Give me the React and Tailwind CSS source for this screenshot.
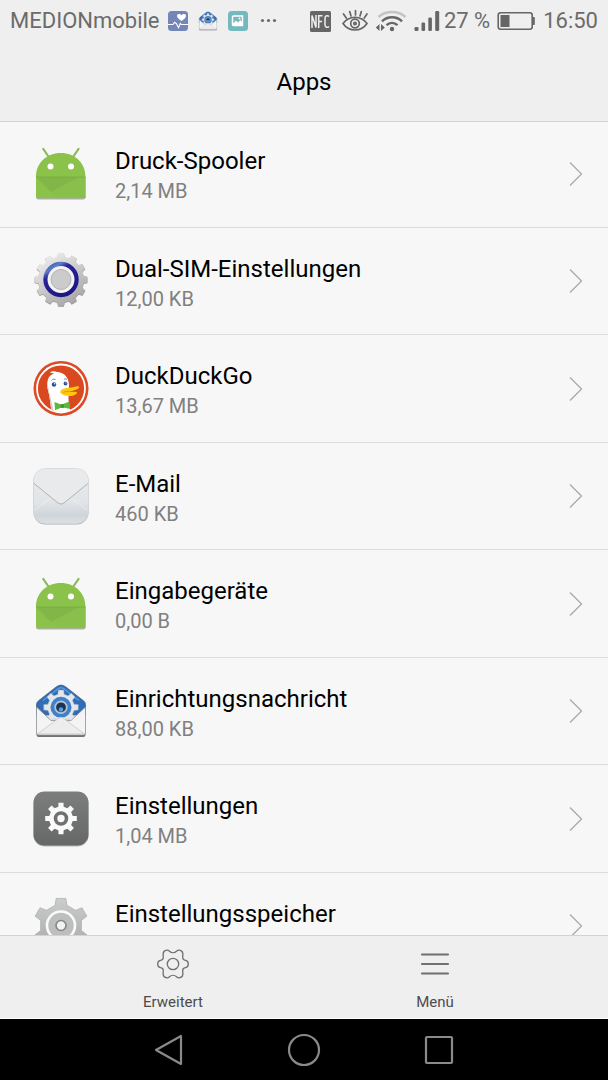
// Builds a closed cog outline. tip and base are shares of one tooth pitch.
function cogPoints({ cx, cy, teeth, outer, inner, tip = 0.36, base = 0.56, start = -90 }) {
  const pitch = 360 / teeth;
  const points = [];
  for (let i = 0; i < teeth; i++) {
    const mid = start + i * pitch;
    [
      [inner, -base / 2],
      [outer, -tip / 2],
      [outer, tip / 2],
      [inner, base / 2],
    ].forEach(([radius, share]) => {
      const angle = ((mid + share * pitch) * Math.PI) / 180;
      points.push(
        `${(cx + radius * Math.cos(angle)).toFixed(2)},${(cy + radius * Math.sin(angle)).toFixed(2)}`
      );
    });
  }
  return points.join(" ");
}

function Cog({ cx, cy, teeth, outer, inner, tip, base, start, ...props }) {
  return (
    <polygon
      points={cogPoints({ cx, cy, teeth, outer, inner, tip, base, start })}
      strokeLinejoin="round"
      {...props}
    />
  );
}

function AppIcon({ children }) {
  return (
    <svg viewBox="0 0 60 60" className="size-[60px] shrink-0" aria-hidden="true">
      {children}
    </svg>
  );
}

function AndroidIcon() {
  return (
    <AppIcon>
      <path d="M5 52h49.500v1a2.500 2.500 0 0 1-2.500 2.500H7.500A2.500 2.500 0 0 1 5 53Z" fill="#a9b39c" />
      <path d="M12.300 5 17.800 13M47.500 5 42 13" stroke="#8bb85a" strokeWidth="2.2" strokeLinecap="round" />
      <path d="M5 33C5 19 15.500 9 29.800 9S54.500 19 54.500 33v18.500A2.500 2.500 0 0 1 52 54H7.500A2.500 2.500 0 0 1 5 51.500Z" fill="#8bc34a" />
      <path d="M5 33 22 50 27 54h27.500V33Z" fill="#89c04b" />
      <path d="M5 33 20 48 48 33Z" fill="#82b648" />
      <path d="M5 33h49.500" stroke="#78ac41" strokeWidth=".9" />
      <circle cx="19.500" cy="22.500" r="3" fill="#fff" />
      <circle cx="40" cy="22.500" r="3" fill="#fff" />
    </AppIcon>
  );
}

function DualSimIcon() {
  return (
    <AppIcon>
      <defs>
        <linearGradient id="simBody" x1="0" y1="0" x2="0.6" y2="1">
          <stop offset="0" stopColor="#f6f6f6" />
          <stop offset="1" stopColor="#a9a9a9" />
        </linearGradient>
        <linearGradient id="simRing" x1="0" y1="0" x2="0.6" y2="1">
          <stop offset="0" stopColor="#2c3f9c" />
          <stop offset="0.2" stopColor="#5d80c8" />
          <stop offset="0.35" stopColor="#2a2298" />
          <stop offset="1" stopColor="#1d1685" />
        </linearGradient>
      </defs>
      <Cog cx={30} cy={29.3} teeth={12} outer={26.6} inner={23} tip={0.42} base={0.62} fill="#979797" />
      <Cog cx={30} cy={28.5} teeth={12} outer={26.5} inner={23} tip={0.42} base={0.62} fill="url(#simBody)" />
      <circle cx="30" cy="28.500" r="14" fill="#f2f2f2" />
      <circle cx="30" cy="28.500" r="15.600" fill="none" stroke="url(#simRing)" strokeWidth="4.200" />
      <circle cx="30" cy="28.500" r="10" fill="#cbcbcb" stroke="#b3b3b3" />
    </AppIcon>
  );
}

function DuckIcon() {
  return (
    <AppIcon>
      <defs>
        <clipPath id="duckClip">
          <circle cx="30" cy="29.500" r="23.500" />
        </clipPath>
      </defs>
      <circle cx="30" cy="29.500" r="27.500" fill="#dc4a26" />
      <circle cx="30" cy="29.500" r="24" fill="#d9481f" stroke="#fff" strokeWidth="1.800" />
      <g clipPath="url(#duckClip)">
        <path d="M21 56 18.500 38c-.9-6-2.700-9-2.200-14 .5-5.500 3.200-8.500 6.700-9.500-1.500-.8-3-.9-4.200-.8 2.200-1.800 5.200-1.700 7.200-.7 6.500.5 10.500 4 11.700 10.500.7 4.500-.2 11-.2 16 0 5 1.500 11 2.500 16Z" fill="#fff" />
        <path d="M21 56 18.500 38c-.9-6-2.700-9-2.200-14 1.700 9 4.700 20 7.200 32Z" fill="#d6cdca" />
      </g>
      <path d="M29 33c1-3.200 5-4 9-4.300 3.500-.3 6-1.400 9-1.500 2.200.2 1 2.500-1.500 3.400-2.500 1-5 1.600-7.500 2 2.500.5 5.200-.2 7.500.5 1.500.7-.5 2.700-3 3.300-4.500 1.300-11.500.2-13.500-3.400Z" fill="#fdc80a" />
      <path d="M32.500 33.300c2.500-.9 4-1 6-1" stroke="#d89a09" fill="none" />
      <circle cx="23" cy="25.500" r="2.200" fill="#2d4f8e" />
      <circle cx="34.500" cy="24.500" r="1.900" fill="#2d4f8e" />
      <circle cx="23.700" cy="24.700" r=".7" fill="#fff" />
      <circle cx="35" cy="23.800" r=".6" fill="#fff" />
      <path d="M20.500 21.500c1-1.300 2.500-1.500 4-1M33 20.500c1-.8 2.200-.8 3 0" stroke="#2d4f8e" strokeWidth=".7" fill="none" />
      <path d="m23.500 43 6.500 2.500 2-.5 6.500-2.500.7 7.500-6.700-1.500-2.500.3-6 2.500Z" fill="#5fb742" />
      <path d="m29.500 45.300 3.500-.3.300 3.700-3.500.3Z" fill="#43992e" />
    </AppIcon>
  );
}

function MailIcon() {
  return (
    <AppIcon>
      <defs>
        <linearGradient id="mailBody" x1="0" y1="0" x2="0" y2="1">
          <stop offset="0" stopColor="#e9ebec" />
          <stop offset="0.6" stopColor="#e2e5e8" />
          <stop offset="0.85" stopColor="#cfd5da" />
          <stop offset="1" stopColor="#dce0e3" />
        </linearGradient>
      </defs>
      <rect x="2.500" y="3.500" width="55" height="55" rx="12" fill="#acaeb0" />
      <rect x="2.500" y="2.500" width="55" height="55" rx="12" fill="url(#mailBody)" stroke="#d4d6d7" strokeWidth=".8" />
      <path d="m4 44 17-13M56 44 39 31" stroke="#eef0f1" strokeWidth=".8" />
      <path d="M3 14.500A11.500 11.500 0 0 1 14.500 3h31A11.500 11.500 0 0 1 57 14.500v3L33 37q-3 2.400-6 0L3 17.500Z" fill="#e8eaeb" />
      <path d="M3 17.500 27 37q3 2.400 6 0l24-19.500" fill="none" stroke="#a9acae" strokeWidth=".9" />
    </AppIcon>
  );
}

function SetupMessageIcon() {
  return (
    <AppIcon>
      <SetupMessageArt />
    </AppIcon>
  );
}

function SetupMessageArt() {
  return (
    <>
      <path d="M5.500 23.500q0-2 2-3.700L25.500 5.700q4.500-3.200 9 0l18 14.100q2 1.700 2 3.700V34h-49Z" fill="#2f6db8" stroke="#46607f" strokeWidth=".8" />
      <path d="M12 19.500 27 7.800q3-2.200 6 0l15 11.700" fill="none" stroke="#5a97da" strokeWidth="1.500" />
      <Cog cx={30} cy={26.3} teeth={8} outer={17.5} inner={13.5} tip={0.4} base={0.6} fill="#e3e6ea" stroke="#93a5ba" strokeWidth=".5" />
      <circle cx="30" cy="26.300" r="10.500" fill="#3f80cb" />
      <circle cx="30" cy="26.300" r="5.800" fill="#1d3554" stroke="#b4c2d2" strokeWidth="1.800" />
      <circle cx="30" cy="28.500" r="2.200" fill="#4fa3df" />
      <path d="M5.500 50h49v3.500A2.500 2.500 0 0 1 52 56H8a2.500 2.500 0 0 1-2.500-2.500Z" fill="#6f7173" />
      <path d="M5.500 26 20 39.500h20L54.500 26v25.500A2.500 2.500 0 0 1 52 54H8a2.500 2.500 0 0 1-2.500-2.500Z" fill="#f4f4f5" stroke="#8d9093" strokeWidth=".8" />
      <path d="M6.500 53 28 37q2-1.500 4 0L53.500 53Z" fill="#ededee" stroke="#c6c8ca" strokeWidth=".8" />
    </>
  );
}

function SettingsIcon() {
  return (
    <AppIcon>
      <defs>
        <linearGradient id="settingsBody" x1="0" y1="0" x2="0" y2="1">
          <stop offset="0" stopColor="#7c7e7d" />
          <stop offset="1" stopColor="#666867" />
        </linearGradient>
      </defs>
      <rect x="2.500" y="3" width="55" height="54.500" rx="11" fill="#b5b6b5" />
      <rect x="2.500" y="2.500" width="55" height="54" rx="11" fill="url(#settingsBody)" />
      <Cog cx={30} cy={29.5} teeth={8} outer={16} inner={12} tip={0.4} base={0.56} fill="#fafafa" />
      <circle cx="30" cy="29.500" r="5.500" fill="none" stroke="#6f7170" strokeWidth="3.600" />
    </AppIcon>
  );
}

function StorageIcon() {
  return (
    <AppIcon>
      <defs>
        <linearGradient id="storageBody" x1="0" y1="0" x2="0" y2="1">
          <stop offset="0" stopColor="#cbcccc" />
          <stop offset="1" stopColor="#a6a7a7" />
        </linearGradient>
      </defs>
      <Cog cx={30} cy={29.5} teeth={6} outer={27.5} inner={21} tip={0.34} base={0.54} fill="url(#storageBody)" stroke="#b0b1b1" strokeWidth=".8" />
      <circle cx="30" cy="29.500" r="14" fill="#bdbebe" stroke="#fafafa" strokeWidth="2.600" />
      <circle cx="30" cy="29.500" r="5" fill="#f2f2f2" stroke="#858686" strokeWidth="1.600" />
    </AppIcon>
  );
}

const apps = [
  { name: "Druck-Spooler", size: "2,14 MB", icon: AndroidIcon },
  { name: "Dual-SIM-Einstellungen", size: "12,00 KB", icon: DualSimIcon },
  { name: "DuckDuckGo", size: "13,67 MB", icon: DuckIcon },
  { name: "E-Mail", size: "460 KB", icon: MailIcon },
  { name: "Eingabegeräte", size: "0,00 B", icon: AndroidIcon },
  { name: "Einrichtungsnachricht", size: "88,00 KB", icon: SetupMessageIcon },
  { name: "Einstellungen", size: "1,04 MB", icon: SettingsIcon },
  { name: "Einstellungsspeicher", size: "", icon: StorageIcon },
];

function StatusBar() {
  return (
    <div className="flex h-[42px] items-center justify-between px-[10px] text-[22px] leading-[26px] text-[#6b6b6b]">
      <div className="flex items-center gap-2">
        <span>MEDIONmobile</span>
        <div className="flex items-center gap-[10px]">
          <svg viewBox="0 0 20 20" className="size-5" aria-hidden="true">
            <rect width="20" height="20" rx="3.500" fill="#7486b8" />
            <path d="M13.500 10C11 8 9 6.500 9 4.900c0-2 3-2.600 4.500-.6 1.500-2 4.500-1.400 4.500.6C18 6.500 16 8 13.500 10Z" fill="#fff" />
            <path d="M0 13.500h5l1.500-2.300 2 1.500 2 4 1.800-4.200 1 1H20" fill="none" stroke="#fff" strokeWidth="1.100" />
          </svg>
          <svg viewBox="4 2 52 56" className="size-5" aria-hidden="true">
            <SetupMessageArt />
          </svg>
          <svg viewBox="0 0 20 20" className="size-5" aria-hidden="true">
            <rect width="20" height="20" rx="3.500" fill="#74b9be" />
            <path d="M5.500 5h9v9.500h-9a1 1 0 0 1-1-1V6a1 1 0 0 1 1-1Z" fill="none" stroke="#fff" strokeWidth="1.500" />
            <path d="m5 12.500 3-3 2 2 2.500-2.500 2 3v2H5Z" fill="#fff" />
            <circle cx="11.500" cy="7.500" r="1" fill="#fff" />
          </svg>
          <svg viewBox="0 0 20 20" className="size-5" fill="#6b6b6b" aria-hidden="true">
            <circle cx="4.500" cy="9.500" r="1.600" />
            <circle cx="10.500" cy="9.500" r="1.600" />
            <circle cx="16.500" cy="9.500" r="1.600" />
          </svg>
        </div>
      </div>
      <div className="flex items-center">
        <svg viewBox="0 0 21 21" className="mr-[10px] size-[21px]" role="img" aria-label="NFC">
          <rect width="21" height="21" rx="1.500" fill="#666" />
          <path d="M2 17V4.500l4 12V4M8.700 17V4.800h3.800M8.700 10.500h3.300M19 5.500c-1-1-4-1.500-4 2v6c0 3.500 3 3.200 4 2" fill="none" stroke="#f0f0f0" strokeWidth="1.500" />
        </svg>
        <svg viewBox="0 0 28 24" className="mr-[6px] h-6 w-7" fill="none" stroke="#666" strokeWidth="1.700" strokeLinecap="round" aria-hidden="true">
          <path d="M2 14.500C5 10.300 9 8.300 14 8.300s9 2 12 6.200c-3 4.400-7 6.500-12 6.500s-9-2.100-12-6.500Z" />
          <circle cx="14" cy="14.500" r="4.300" />
          <circle cx="14" cy="14.500" r="1.200" />
          <path d="m2.500 5 2.800 4M8.700 2.500l1.300 4.500M14.500 1.500V6M20.300 2.500 19 7M26 5l-2.800 4" />
        </svg>
        <svg viewBox="0 0 32 24" className="mr-[7px] h-6 w-8" fill="none" stroke="#666" strokeWidth="2.500" aria-hidden="true">
          <path d="M3.500 8C10.500 1.300 23.500 1.300 30.500 8" stroke="#c4c4c4" />
          <path d="M7 12.300c5.500-5.300 14.500-5.300 20 0M11.500 16.200c3.300-3 7.700-3 11 0" />
          <circle cx="17" cy="20" r="2.200" fill="#666" stroke="none" />
          <path d="M.8 18.500 4.500 15v7ZM9.800 18.500 6 15v7Z" fill="#666" stroke="none" />
        </svg>
        <svg viewBox="0 0 26 22" className="mr-[4px] h-[22px] w-[26px]" fill="#666" aria-hidden="true">
          <rect x="0.500" y="17" width="4" height="4" rx="1.200" />
          <rect x="7.500" y="12.500" width="3.600" height="8.500" rx="1.200" />
          <rect x="14.300" y="7.500" width="3.600" height="13.500" rx="1.200" />
          <rect x="21.200" y="1" width="4" height="20" rx="1.200" />
        </svg>
        <span>27 %</span>
        <svg viewBox="0 0 39 20" className="mx-[7px] h-5 w-[39px]" aria-hidden="true">
          <rect x="1.200" y="1.700" width="34" height="16.500" rx="2.500" fill="none" stroke="#666" strokeWidth="1.600" />
          <rect x="3.500" y="4" width="9" height="12" fill="#666" />
          <path d="M35.500 6h1.500q.8 0 .8.800v6.400q0 .8-.8.800h-1.500" fill="#666" />
        </svg>
        <span>16:50</span>
      </div>
    </div>
  );
}

function AppRow({ app }) {
  const Icon = app.icon;
  return (
    <li className="h-[107px] shrink-0 border-b border-[#dcdcdc] first:h-[106px] first:pb-[2px] odd:not-first:h-[108px]">
      <button type="button" className="flex size-full items-center pl-[31px] pr-[25px] text-left">
        <Icon />
        <span className="ml-6 min-w-0 flex-1 pt-[3px]">
          <span className="block truncate text-2xl leading-8 text-black">{app.name}</span>
          <span className="block h-7 text-xl leading-7 text-[#808080]">{app.size}</span>
        </span>
        <svg viewBox="0 0 14 26" className="h-[26px] w-[14px] shrink-0" fill="none" stroke="#aaa" strokeWidth="1.300" aria-hidden="true">
          <path d="M1 1.500 12.500 13 1 24.500" />
        </svg>
      </button>
    </li>
  );
}

export default function App() {
  return (
    <div className="flex h-screen flex-col bg-[#f7f7f7] font-[Roboto,sans-serif]">
      <header className="h-[122px] shrink-0 border-b border-[#d2d2d2] bg-[#efefef]">
        <StatusBar />
        <h1 className="py-6 text-center text-2xl leading-8 text-black">Apps</h1>
      </header>

      <main className="min-h-0 flex-1 overflow-y-auto [scrollbar-width:none]">
        <ul className="flex flex-col">
          {apps.map((app) => (
            <AppRow key={app.name} app={app} />
          ))}
        </ul>
      </main>

      <footer className="grid h-[84px] shrink-0 grid-cols-2 border-b border-t border-b-white border-t-[#d2d2d2] bg-[#efefef] px-[42px] text-[15px] leading-5 text-[#4c4c4c]">
        <button type="button" className="flex flex-col items-center gap-3 pt-3">
          <svg viewBox="-16 -16 32 32" className="size-8" fill="none" stroke="#707070" strokeWidth="1.300" strokeLinejoin="round" aria-hidden="true">
            <path d="M15.300 0C15.300 2.400 14.300 3.400 12.500 3.700 10.500 4 9.700 4.600 9.700 6.500 9.700 8.500 10.700 11.500 8.600 12.900 6.500 14.300 5 14.200 3.500 12.700 1.500 10.900-1.500 10.900-3.500 12.700-5 14.200-6.500 14.300-8.600 12.900-10.700 11.500-9.700 8.500-9.700 6.500-9.700 4.600-10.500 4-12.500 3.700-14.300 3.400-15.300 2.400-15.300 0S-14.300-3.400-12.500-3.700C-10.500-4-9.700-4.600-9.700-6.500-9.700-8.500-10.700-11.500-8.600-12.900-6.500-14.300-5-14.200-3.500-12.700-1.500-10.900 1.500-10.900 3.500-12.700 5-14.200 6.500-14.300 8.600-12.900 10.700-11.500 9.700-8.500 9.700-6.500 9.700-4.600 10.500-4 12.500-3.700 14.300-3.400 15.300-2.400 15.300 0Z" />
            <circle r="5.700" />
          </svg>
          Erweitert
        </button>
        <button type="button" className="flex flex-col items-center gap-3 pt-3">
          <svg viewBox="0 0 32 32" className="size-8" stroke="#707070" strokeWidth="2.200" strokeLinecap="round" aria-hidden="true">
            <path d="M3 6.500h26M3 16h26M3 25.500h26" />
          </svg>
          Menü
        </button>
      </footer>

      <nav className="grid h-[61px] shrink-0 grid-cols-3 items-center justify-items-center bg-black px-[102px]">
        <button type="button" aria-label="Zurück">
          <svg viewBox="0 0 34 34" className="size-[34px]" fill="none" stroke="#8a8a8a" strokeWidth="2.200" strokeLinejoin="round" aria-hidden="true">
            <path d="M29 3v28L4 17Z" />
          </svg>
        </button>
        <button type="button" aria-label="Startseite">
          <svg viewBox="0 0 34 34" className="size-[34px]" fill="none" stroke="#8a8a8a" strokeWidth="2.200" aria-hidden="true">
            <circle cx="17" cy="17" r="15" />
          </svg>
        </button>
        <button type="button" aria-label="Letzte Apps">
          <svg viewBox="0 0 34 34" className="size-[34px]" fill="none" stroke="#8a8a8a" strokeWidth="2.200" strokeLinejoin="round" aria-hidden="true">
            <rect x="4" y="4" width="26" height="26" rx="1" />
          </svg>
        </button>
      </nav>
    </div>
  );
}
